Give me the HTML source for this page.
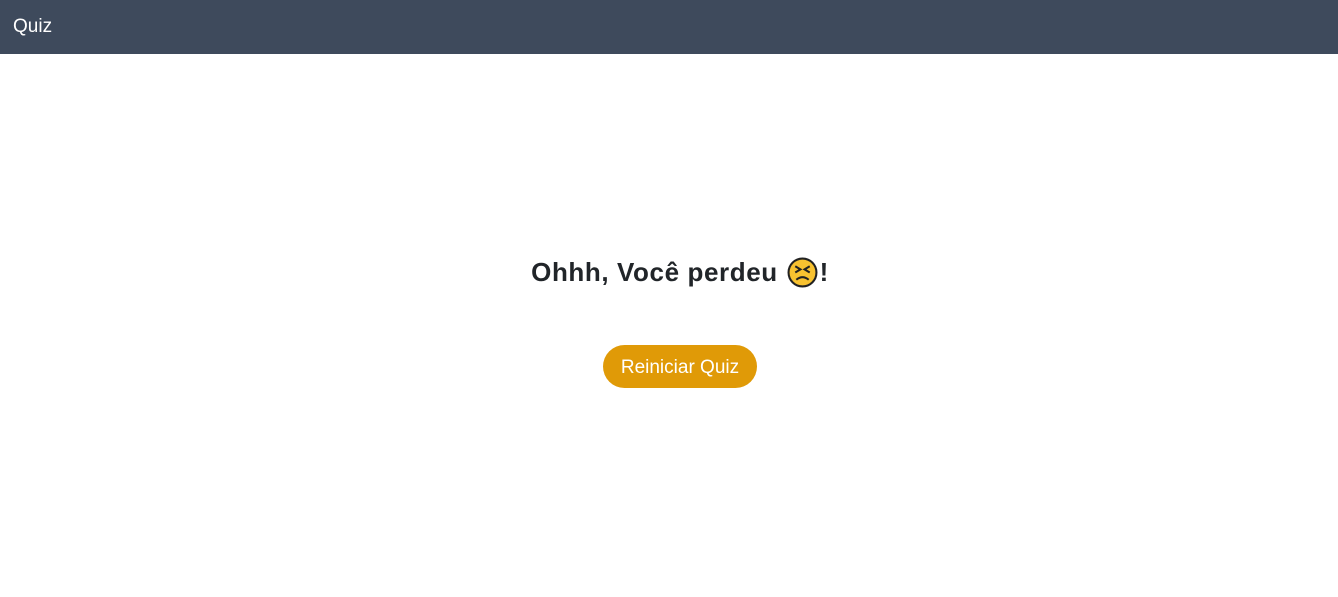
<!DOCTYPE html>
<html><head><style>
html,body{margin:0;padding:0;width:1338px;height:597px;background:#fff;font-family:"Liberation Sans",sans-serif;overflow:hidden}
.nav{height:54px;background:#3e4a5c;color:#fff;font-size:19px;line-height:54px;padding-left:13px}
h1{position:absolute;top:254px;left:11px;width:1338px;text-align:center;margin:0;font-size:26px;font-weight:bold;color:#212529;line-height:36px;letter-spacing:0.6px}
h1 svg{vertical-align:-7px;margin:0 2px 0 1px}
.btn{position:absolute;left:603px;top:345px;width:154px;height:43px;border-radius:22px;background:#e09a07;color:#fff;font-size:19px;line-height:46px;text-align:center}
</style></head><body>
<div class="nav">Quiz</div>
<h1>Ohhh, Você perdeu <svg width="31" height="31" viewBox="0 0 30 30"><circle cx="15" cy="15" r="13.5" fill="#f8c230" stroke="#222" stroke-width="2"/><path d="M8 9l5 3-5 3M22 9l-5 3 5 3" stroke="#222" stroke-width="2" fill="none"/><path d="M9 22q6-5 12 0" stroke="#222" stroke-width="2" fill="none"/></svg>!</h1>
<div class="btn">Reiniciar Quiz</div>
</body></html>
